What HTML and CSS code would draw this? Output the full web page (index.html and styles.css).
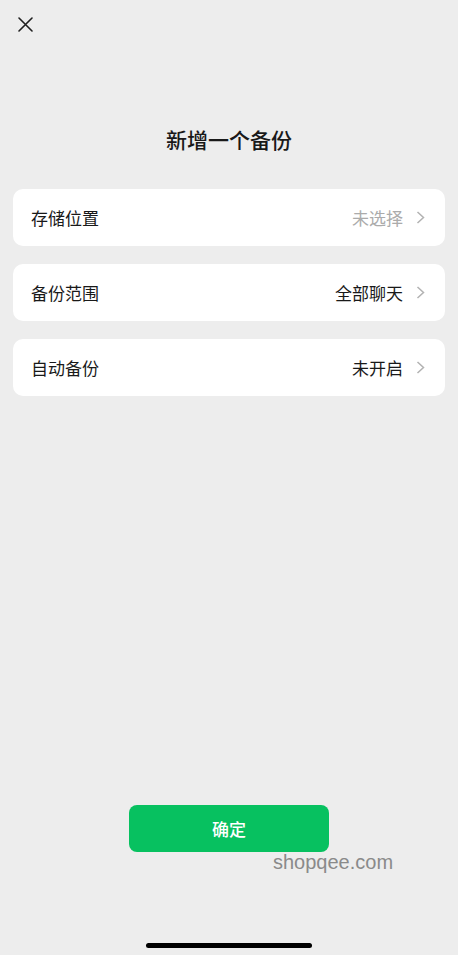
FILE: index.html
```html
<!DOCTYPE html>
<html lang="zh-CN">

<head>
    <meta charset="UTF-8">
    <meta name="viewport" content="width=device-width, initial-scale=1.0">
    <title>新增一个备份</title>
    <link rel="stylesheet" href="styles.css">
</head>

<body>
    <div class="page">
        <div class="top-bar">
            <svg class="close" width="15" height="15" viewBox="0 0 15 15">
                <path d="M1 1L14 14M14 1L1 14" stroke="#1f1f1f" stroke-width="1.6" stroke-linecap="round" fill="none" />
            </svg>
        </div>

        <h1 class="title">新增一个备份</h1>

        <ul class="cells">
            <li class="cell">
                <span class="cell-label">存储位置</span>
                <span class="cell-value muted">未选择</span>
                <svg class="arrow" width="9" height="13" viewBox="0 0 9 13">
                    <path d="M1.5 1L7.5 6.5L1.5 12" stroke="#b2b2b2" stroke-width="1.5" fill="none" />
                </svg>
            </li>
            <li class="cell">
                <span class="cell-label">备份范围</span>
                <span class="cell-value">全部聊天</span>
                <svg class="arrow" width="9" height="13" viewBox="0 0 9 13">
                    <path d="M1.5 1L7.5 6.5L1.5 12" stroke="#b2b2b2" stroke-width="1.5" fill="none" />
                </svg>
            </li>
            <li class="cell">
                <span class="cell-label">自动备份</span>
                <span class="cell-value">未开启</span>
                <svg class="arrow" width="9" height="13" viewBox="0 0 9 13">
                    <path d="M1.5 1L7.5 6.5L1.5 12" stroke="#b2b2b2" stroke-width="1.5" fill="none" />
                </svg>
            </li>
        </ul>

        <div class="footer">
            <button class="btn-ok">确定</button>
            <div class="home-bar"></div>
        </div>

        <span class="watermark">shopqee.com</span>
    </div>
</body>

</html>
```

FILE: styles.css
```css
body {
    margin: 0;
    padding: 0;
    background-color: #ededed;
    font-family: "Noto Sans CJK SC", "Noto Sans", sans-serif;
    color: #191919;
}

.page {
    position: relative;
    height: 955px;
    display: flex;
    flex-direction: column;
    overflow: hidden;
}

.top-bar {
    padding: 17px 0 0 18px;
    height: 15px;
}

.close {
    display: block;
}

.title {
    margin: 92px 0 0;
    font-size: 21px;
    line-height: 30px;
    font-weight: 500;
    text-align: center;
}

.cells {
    margin: 35px 13px 0 13px;
    padding: 0;
    list-style-type: none;
    display: flex;
    flex-direction: column;
    gap: 18px;
}

.cell {
    height: 57px;
    display: flex;
    align-items: center;
    padding: 0 20px 0 18px;
    background-color: #fff;
    border-radius: 10px;
    font-size: 17px;
}

.cell-label {
    flex: 1;
}

.cell-value {
    margin-right: 13px;
}

.cell-value.muted {
    color: #ababab;
}

.arrow {
    display: block;
}

.footer {
    margin-top: auto;
    display: flex;
    flex-direction: column;
    align-items: center;
    padding-bottom: 7px;
}

.btn-ok {
    width: 200px;
    height: 47px;
    border: none;
    border-radius: 8px;
    background-color: #07c160;
    color: #fff;
    font-family: "Noto Sans CJK SC", "Noto Sans", sans-serif;
    font-size: 17px;
    font-weight: 500;
}

.home-bar {
    margin-top: 91px;
    width: 166px;
    height: 5px;
    border-radius: 3px;
    background-color: #000;
}

.watermark {
    position: absolute;
    left: 273px;
    top: 851px;
    font-family: "Liberation Sans", Arial, sans-serif;
    font-size: 20px;
    color: #8a8a8a;
}
```
